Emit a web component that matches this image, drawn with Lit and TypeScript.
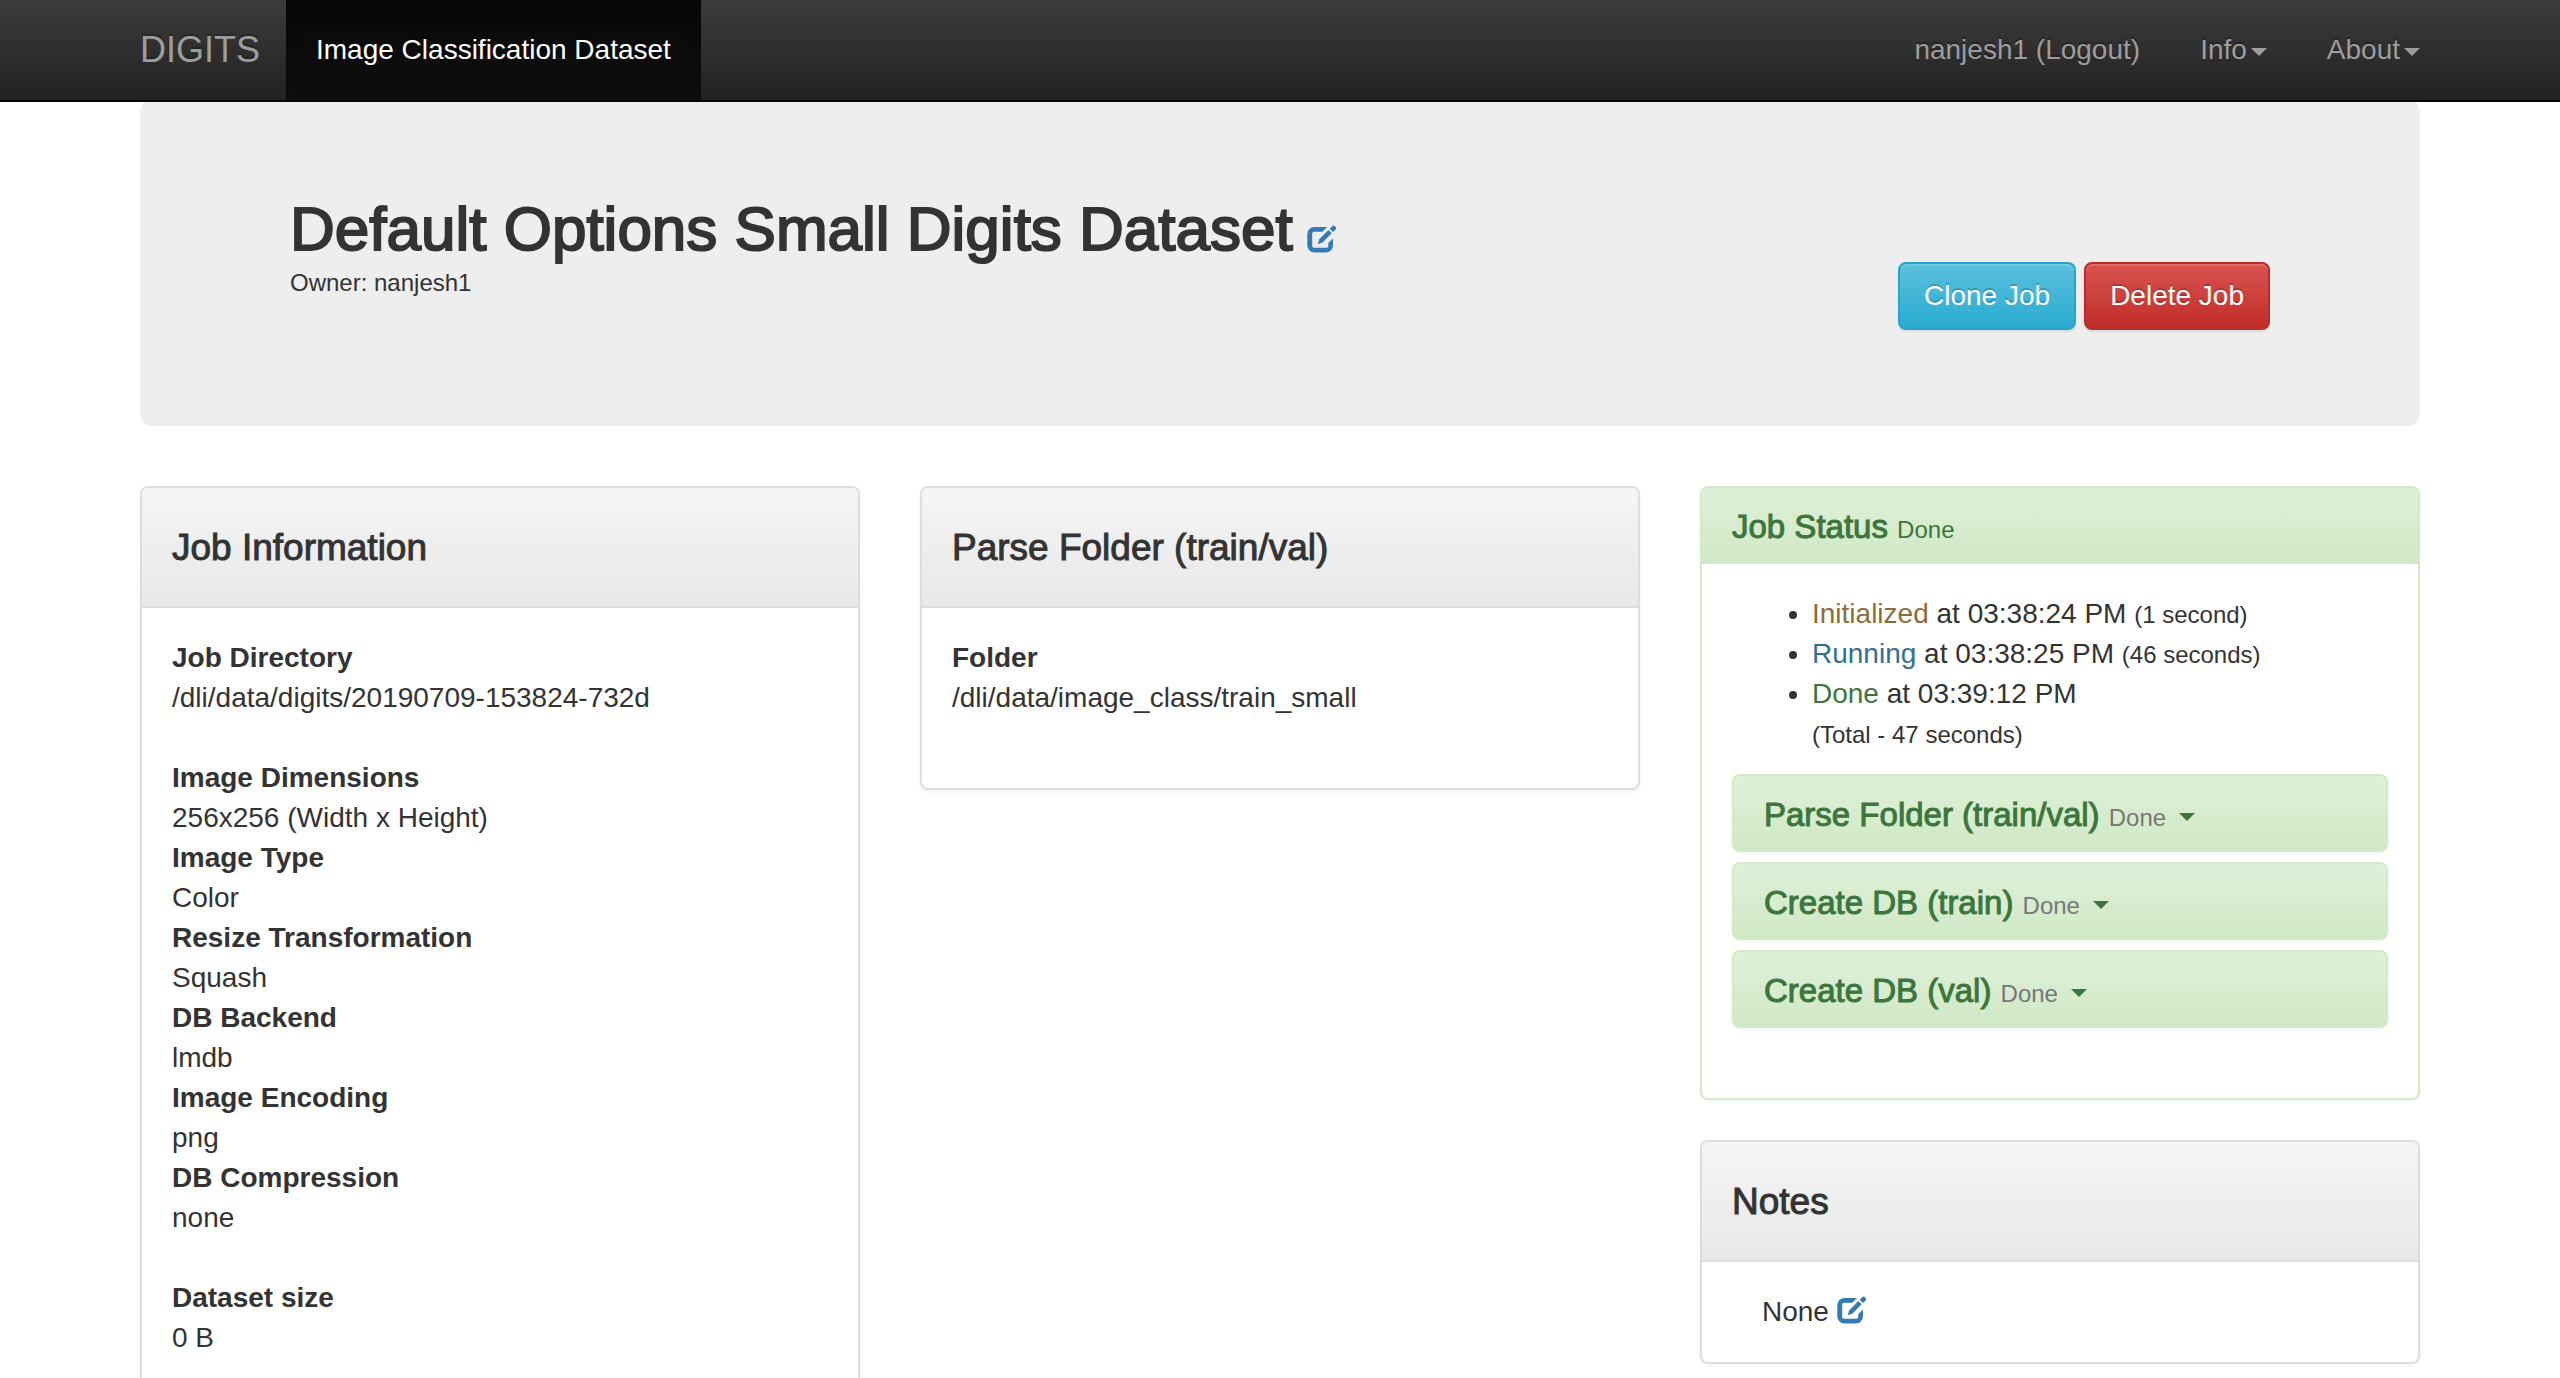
import { LitElement, html, css } from "lit";
import { customElement, property } from "lit/decorators.js";

interface Field {
  term: string;
  value: string;
}

interface Step {
  name: string;
  tone: string;
  time: string;
  span: string;
}

const DIRECTORY: Field[] = [
  { term: "Job Directory", value: "/dli/data/digits/20190709-153824-732d" },
];

const IMAGE_FIELDS: Field[] = [
  { term: "Image Dimensions", value: "256x256 (Width x Height)" },
  { term: "Image Type", value: "Color" },
  { term: "Resize Transformation", value: "Squash" },
  { term: "DB Backend", value: "lmdb" },
  { term: "Image Encoding", value: "png" },
  { term: "DB Compression", value: "none" },
];

const SIZE: Field[] = [{ term: "Dataset size", value: "0 B" }];

const FOLDER: Field[] = [
  { term: "Folder", value: "/dli/data/image_class/train_small" },
];

const STEPS: Step[] = [
  { name: "Initialized", tone: "warning", time: "03:38:24 PM", span: "(1 second)" },
  { name: "Running", tone: "info", time: "03:38:25 PM", span: "(46 seconds)" },
  { name: "Done", tone: "success", time: "03:39:12 PM", span: "(Total - 47 seconds)" },
];

const TASKS = ["Parse Folder (train/val)", "Create DB (train)", "Create DB (val)"];

@customElement("edit-icon")
export class EditIcon extends LitElement {
  static styles = css`
    :host {
      display: inline-block;
      width: 30px;
      height: 28px;
    }
    .icon {
      display: block;
      width: 100%;
      height: 100%;
    }
  `;

  render() {
    return html`<svg class="icon" viewBox="0 0 30 28" fill="currentColor" aria-hidden="true">
      <path
        d="M20 2H7.500A7.200 7.200 0 0 0 .3 9.200V20.300A7.200 7.200 0 0 0 7.500 27.500H18.800A7.200 7.200 0 0 0 26 20.300V13.500L21.300 18V21A1.800 1.800 0 0 1 19.500 22.800H7A1.800 1.800 0 0 1 5.200 21V8.600A1.800 1.800 0 0 1 7 6.800H15.300Z"
      />
      <path d="M21.400 5L24.700 8.300L15.500 17.400L10.700 19.200L12.300 14.200Z" />
      <path d="M22.700 3.700L25.300 1.100Q26.700 0 28 1.200L28.600 1.800Q29.800 3.200 28.600 4.500L26 7Z" />
    </svg>`;
  }
}

@customElement("info-panel")
export class InfoPanel extends LitElement {
  @property() heading = "";

  static styles = css`
    :host {
      display: block;
    }
    .panel {
      border: 2px solid #ddd;
      border-radius: 8px;
      background: #fff;
      box-shadow: 0 2px 4px rgba(0, 0, 0, 0.05);
    }
    .head {
      padding: 41px 30px 39px;
      border-bottom: 2px solid #ddd;
      border-radius: 6px 6px 0 0;
      background: linear-gradient(#f5f5f5, #e8e8e8);
    }
    .title {
      margin: 0;
      font-size: 37px;
      line-height: 38px;
      font-weight: 400;
      -webkit-text-stroke: 1px currentColor;
    }
    .body {
      padding: 30px;
    }
  `;

  render() {
    return html`<section class="panel">
      <div class="head"><h4 class="title">${this.heading}</h4></div>
      <div class="body"><slot></slot></div>
    </section>`;
  }
}

@customElement("app-root")
export class AppRoot extends LitElement {
  static styles = css`
    :host {
      display: block;
      color: #333;
      background: #fff;
      font-family: "Liberation Sans", Arial, Helvetica, sans-serif;
      font-size: 28px;
      line-height: 40px;
    }
    .container {
      margin: 0 140px;
    }
    .navbar {
      position: relative;
      z-index: 1;
      margin-bottom: -2px;
      border-bottom: 2px solid #080808;
      background: linear-gradient(#3c3c3c, #222);
    }
    .bar {
      display: flex;
      justify-content: space-between;
    }
    .group {
      display: flex;
    }
    .brand,
    .link {
      color: #9d9d9d;
      text-decoration: none;
      text-shadow: 0 -2px 0 rgba(0, 0, 0, 0.25);
    }
    .brand {
      padding: 30px 26px 30px 0;
      font-size: 36px;
    }
    .link {
      padding: 30px;
    }
    .link:last-child {
      padding-right: 0;
    }
    .active,
    .active:last-child {
      padding: 30px;
      color: #fff;
      background: linear-gradient(#080808, #0f0f0f);
      box-shadow: inset 0 6px 18px rgba(0, 0, 0, 0.25);
    }
    .caret {
      display: inline-block;
      margin-left: 4px;
      border-top: 8px solid;
      border-left: 8px solid transparent;
      border-right: 8px solid transparent;
      vertical-align: middle;
    }
    .jumbotron {
      display: flex;
      justify-content: space-between;
      align-items: flex-start;
      margin-bottom: 60px;
      padding: 96px 150px;
      border-radius: 12px;
      background: #eee;
    }
    .name {
      margin: 0;
      font-size: 62px;
      line-height: 66px;
      font-weight: 400;
    }
    .name-text {
      -webkit-text-stroke: 2px currentColor;
    }
    .small {
      font-size: 24px;
      line-height: 1;
    }
    .edit {
      color: #337ab7;
      line-height: 1;
    }
    .name .edit {
      margin-left: 14px;
      font-size: 28px;
    }
    .edit edit-icon {
      vertical-align: -3px;
    }
    .actions {
      display: flex;
      gap: 8px;
      padding-top: 66px;
    }
    .btn {
      padding: 12px 24px;
      border: 2px solid;
      border-radius: 8px;
      color: #fff;
      font: inherit;
      text-shadow: 0 -2px 0 rgba(0, 0, 0, 0.2);
      box-shadow: inset 0 2px 0 rgba(255, 255, 255, 0.15), 0 2px 2px rgba(0, 0, 0, 0.075);
    }
    .clone {
      border-color: #28a4c9;
      background: linear-gradient(#5bc0de, #2aabd2);
    }
    .delete {
      border-color: #b92c28;
      background: linear-gradient(#d9534f, #c12e2a);
    }
    .columns {
      display: grid;
      grid-template-columns: repeat(3, 1fr);
      gap: 60px;
      align-items: start;
    }
    .stack {
      display: grid;
      gap: 40px;
    }
    .fields {
      margin: 0 0 40px;
    }
    .term {
      font-weight: 700;
    }
    .value {
      margin: 0;
    }
    .status {
      border: 2px solid #d6e9c6;
      border-radius: 8px;
      box-shadow: 0 2px 4px rgba(0, 0, 0, 0.05);
    }
    .status-head {
      border-bottom: 2px solid #d6e9c6;
      border-radius: 6px 6px 0 0;
    }
    .status-head,
    .task {
      padding: 22px 30px 18px;
      color: #3c763d;
      background: linear-gradient(#dff0d8, #d0e9c6);
    }
    .status-title {
      margin: 0;
      font-size: 33px;
      line-height: 34px;
      font-weight: 400;
    }
    .heavy {
      -webkit-text-stroke: 1px currentColor;
    }
    .status-body {
      padding: 30px 30px 70px;
    }
    .steps {
      margin: 0 0 20px;
      padding-left: 80px;
    }
    .warning {
      color: #8a6d3b;
    }
    .info {
      color: #31708f;
    }
    .success {
      color: #3c763d;
    }
    .tasks {
      display: grid;
      gap: 10px;
    }
    .task {
      display: block;
      border: 2px solid #d6e9c6;
      border-radius: 8px;
      box-shadow: 0 2px 4px rgba(0, 0, 0, 0.05);
      text-decoration: none;
    }
    .muted {
      color: #777;
    }
    .note {
      margin: 0;
      padding-left: 30px;
    }
  `;

  private fields(list: Field[]) {
    return html`<dl class="fields">
      ${list.map(
        (f) => html`<dt class="term">${f.term}</dt>
          <dd class="value">${f.value}</dd>`
      )}
    </dl>`;
  }

  render() {
    return html`
      <nav class="navbar">
        <div class="container bar">
          <div class="group">
            <a class="brand" href="#">DIGITS</a>
            <a class="link active" href="#">Image Classification Dataset</a>
          </div>
          <div class="group">
            <a class="link" href="#">nanjesh1 (Logout)</a>
            <a class="link" href="#">Info<span class="caret"></span></a>
            <a class="link" href="#">About<span class="caret"></span></a>
          </div>
        </div>
      </nav>
      <main class="container">
        <header class="jumbotron">
          <div>
            <h1 class="name"><span class="name-text">Default Options Small Digits Dataset</span><a class="edit" href="#" aria-label="Edit name"><edit-icon></edit-icon></a></h1>
            <div><span class="small">Owner: nanjesh1</span></div>
          </div>
          <div class="actions">
            <button class="btn clone" type="button">Clone Job</button>
            <button class="btn delete" type="button">Delete Job</button>
          </div>
        </header>
        <div class="columns">
          <info-panel heading="Job Information">
            ${this.fields(DIRECTORY)} ${this.fields(IMAGE_FIELDS)} ${this.fields(SIZE)}
          </info-panel>
          <info-panel heading="Parse Folder (train/val)">${this.fields(FOLDER)}</info-panel>
          <div class="stack">
            <section class="status">
              <div class="status-head">
                <h4 class="status-title"><span class="heavy">Job Status</span> <span class="small">Done</span></h4>
              </div>
              <div class="status-body">
                <ul class="steps">
                  ${STEPS.map(
                    (s) => html`<li>
                      <span class=${s.tone}>${s.name}</span> at ${s.time}
                      ${s.name === "Done" ? html`<br />` : ""}
                      <span class="small">${s.span}</span>
                    </li>`
                  )}
                </ul>
                <div class="tasks">
                  ${TASKS.map(
                    (t) => html`<a class="task" href="#">
                      <h4 class="status-title">
                        <span class="heavy">${t}</span> <span class="small muted">Done</span>
                        <span class="caret"></span>
                      </h4>
                    </a>`
                  )}
                </div>
              </div>
            </section>
            <info-panel heading="Notes">
              <p class="note">
                None <a class="edit" href="#" aria-label="Edit notes"><edit-icon></edit-icon></a>
              </p>
            </info-panel>
          </div>
        </div>
      </main>
    `;
  }
}
